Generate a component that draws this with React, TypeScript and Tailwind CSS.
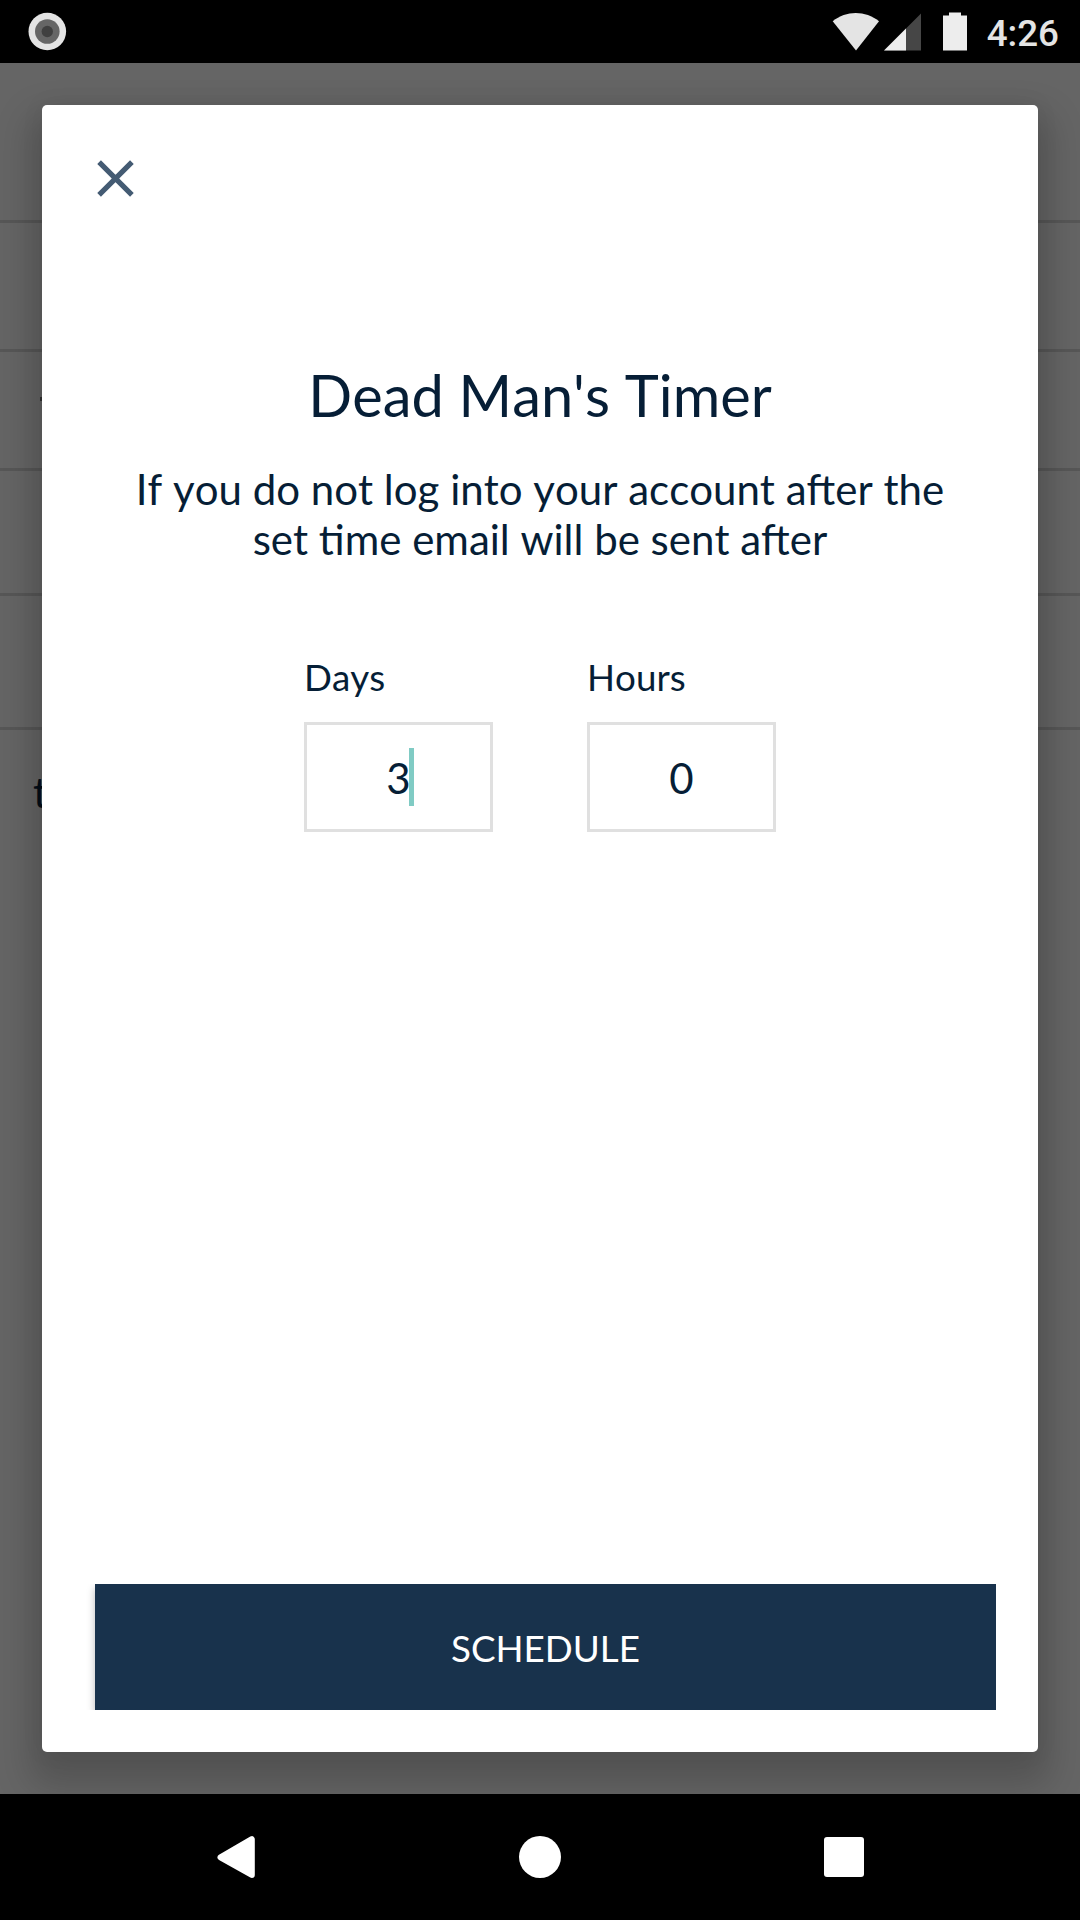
import React from "react";

function StatusBar() {
  return (
    <header className="flex h-[63px] items-center bg-black pl-7 pr-[21px]">
      <svg className="h-[40px] w-[40px]" viewBox="0 0 40 40">
        <circle cx="19.3" cy="19.5" r="18.8" fill="#e4e4e4" />
        <circle cx="19.3" cy="19.5" r="12.3" fill="#666666" />
        <circle cx="19.3" cy="19.5" r="5.7" fill="#404040" />
      </svg>
      <svg className="ml-auto h-[40px] w-[140px]" viewBox="0 0 140 40">
        <path d="M1.7 9.2C15-1.9 34.5-1.9 48 9.2L25 38.5Z" fill="#e4e4e4" />
        <path d="M90 1.5V38.5H53Z" fill="#464646" />
        <path d="M75 16.5V38.5H53Z" fill="#ededed" />
        <path d="M118 0.5H130V3.5H136V38.5H112V3.5H118Z" fill="#ededed" />
      </svg>
      <span className="ml-[15.6px] mt-[5px] font-['Roboto'] text-[36.75px] font-medium leading-[44px] text-[#e4e4e4]">4:26</span>
    </header>
  );
}

function Backdrop() {
  return (
    <div className="flex h-full flex-col bg-[#656565]">
      <div className="h-[160px] shrink-0 border-b-[3px] border-[#575757]" />
      <div className="h-[129px] shrink-0 border-b-[3px] border-[#575757]" />
      <div className="flex h-[119px] shrink-0 items-start border-b-[3px] border-[#575757] pl-[40px] pt-[45px]">
        <span className="h-1 w-3 bg-[#333333]" />
      </div>
      <div className="h-[125px] shrink-0 border-b-[3px] border-[#575757]" />
      <div className="h-[134px] shrink-0 border-b-[3px] border-[#575757]" />
      <div className="pl-[33px] pt-[37px] text-[42px] leading-[50px] text-[#040e18]">t</div>
    </div>
  );
}

function NumberField({ label, value, focused }: { label: string; value: string; focused?: boolean }) {
  return (
    <label className="flex w-[189px] flex-col">
      <span className="text-[36.75px] leading-[44px]">{label}</span>
      <span className="mt-[23px] flex h-[110px] items-center justify-center border-[3px] border-[#e0e0e0] pt-[2px] text-[42px] leading-[50px]">
        <span className="relative">
          {value}
          {focused && <span className="absolute -top-[5px] left-[22.7px] h-[58px] w-[5px] bg-[#80cbc4]" />}
        </span>
      </span>
    </label>
  );
}

function TimerDialog() {
  return (
    <section className="flex h-full flex-col rounded-[5px] bg-white pb-[42px] pl-[53px] pr-[42px] text-[#061e36] shadow-[0_22px_36px_12px_rgba(0,0,0,0.18),0_0_24px_rgba(0,0,0,0.06)]">
      <button className="mt-[53px] flex h-[42px] w-[42px] items-center justify-center" aria-label="Close">
        <svg className="h-[42px] w-[42px]" viewBox="0 0 42 42" fill="none" stroke="#445b73" strokeWidth="5.2">
          <path d="M4.1 4.1L36.9 36.9M36.9 4.1L4.1 36.9" />
        </svg>
      </button>
      <div className="-ml-[11px] flex flex-col items-center">
        <h1 className="mt-[160px] text-[57.75px] leading-[70px]">Dead Man's Timer</h1>
        <p className="mt-[34px] text-center text-[42px] leading-[50px]">
          If you do not log into your account after the
          <br />
          set time email will be sent after
        </p>
        <div className="mt-[91px] flex gap-[94px]">
          <NumberField label="Days" value="3" focused />
          <NumberField label="Hours" value="0" />
        </div>
      </div>
      <div className="-ml-[10px] mt-auto overflow-hidden pl-[10px]">
        <button className="block h-[126px] w-full bg-[#18324c] pt-[2px] text-[36.75px] leading-[44px] text-white shadow-[0_4px_8px_rgba(0,0,0,0.28)]">SCHEDULE</button>
      </div>
    </section>
  );
}

function NavigationBar() {
  return (
    <nav className="flex h-[126px] items-center bg-black pl-[217px]">
      <svg className="h-[44px] w-[39px]" viewBox="0 0 39 44">
        <path d="M3.5 22.3L34.8 4.2V40Z" fill="white" stroke="white" strokeWidth="6" strokeLinejoin="round" />
      </svg>
      <span className="ml-[263px] h-[42px] w-[42px] rounded-full bg-white" />
      <span className="ml-[263px] h-[40px] w-[40px] rounded-[3px] bg-white" />
    </nav>
  );
}

export default function App() {
  return (
    <div className="flex h-[1920px] w-[1080px] flex-col overflow-hidden font-['Lato',sans-serif] [font-kerning:none]">
      <StatusBar />
      <main className="relative h-[1731px] overflow-hidden">
        <Backdrop />
        <div className="absolute inset-0 p-[42px]">
          <TimerDialog />
        </div>
      </main>
      <NavigationBar />
    </div>
  );
}
